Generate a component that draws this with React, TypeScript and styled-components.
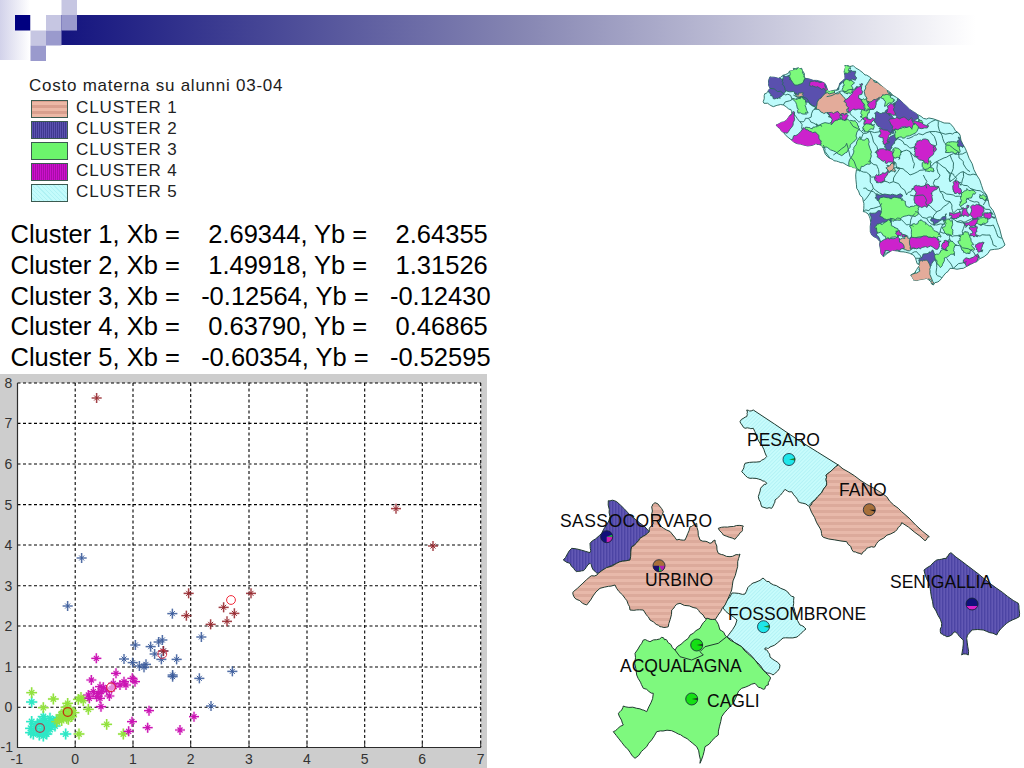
import React from "react";
import styled, { createGlobalStyle } from "styled-components";

type Pt = [number, number];

const GlobalStyle = createGlobalStyle`
  html, body {
    margin: 0;
    padding: 0;
    background: #fff;
    overflow: hidden;
  }
`;

// coordinates below were read from 3x crops, this maps them back to the page
const toPoints = (ox: number, oy: number, list: Pt[], scale = 3) =>
  list.map(([x, y]) => `${(ox + x / scale).toFixed(1)},${(oy + y / scale).toFixed(1)}`).join(" ");

const noise = (a: number, b: number) => {
  const s = Math.sin(a * 12.9898 + b * 78.233) * 43758.5453;
  return s - Math.floor(s) - 0.5;
};

// borders on the maps are wiggly, split each edge and push the midpoint around.
// the push only depends on the midpoint so neighbours keep a shared border
const roughen = (list: Pt[], amp: number, depth = 2, closed = true): Pt[] => {
  let out = list;
  let a = amp;
  for (let d = 0; d < depth; d++) {
    const next: Pt[] = [];
    out.forEach((p, i) => {
      next.push(p);
      const q = out[i + 1] ?? (closed ? out[0] : null);
      if (!q) return;
      const mx = (p[0] + q[0]) / 2;
      const my = (p[1] + q[1]) / 2;
      const key = Math.round(mx * 2);
      const key2 = Math.round(my * 2);
      next.push([mx + noise(key, key2) * a, my + noise(key2, key) * a]);
    });
    out = next;
    a *= 0.65;
  }
  return out;
};

// the patches on the small map were traced a bit too tight
const grow = (list: Pt[], k: number): Pt[] => {
  const cx = list.reduce((acc, p) => acc + p[0], 0) / list.length;
  const cy = list.reduce((acc, p) => acc + p[1], 0) / list.length;
  return list.map(([x, y]) => [cx + (x - cx) * k, cy + (y - cy) * k]);
};

const parseLine = (s: string): Pt[] => s.split(" ").map((p) => p.split(",").map(Number) as Pt);
const joinPts = (list: Pt[]) => list.map(([x, y]) => `${x.toFixed(1)},${y.toFixed(1)}`).join(" ");

const CLUSTERS = [
  { label: "CLUSTER 1", kind: "salmon" },
  { label: "CLUSTER 2", kind: "blue" },
  { label: "CLUSTER 3", kind: "green" },
  { label: "CLUSTER 4", kind: "magenta" },
  { label: "CLUSTER 5", kind: "cyan" },
];

const CENTROIDS = [
  "Cluster 1, Xb =    2.69344, Yb =    2.64355",
  "Cluster 2, Xb =    1.49918, Yb =    1.31526",
  "Cluster 3, Xb =   -0.12564, Yb =   -0.12430",
  "Cluster 4, Xb =    0.63790, Yb =    0.46865",
  "Cluster 5, Xb =   -0.60354, Yb =   -0.52595",
];

/* ---------- scatter data ---------- */
const BLUE_STARS: Pt[] = [[245, -36], [203, 108], [517, 131], [604, 201], [487, 210], [476, 216], [406, 225], [452, 230], [464, 252], [490, 243], [372, 267], [398, 278], [418, 288], [438, 283], [432, 292], [484, 268], [530, 268], [518, 315], [518, 320], [598, 325], [697, 304], [633, 408]];
const RED_STARS: Pt[] = [[290, -516], [1188, -184], [1299, -72], [753, 70], [566, 70], [559, 137], [632, 163], [671, 112], [681, 154], [703, 130], [490, 243]];
const CYAN_STARS: Pt[] = [[95, 396], [197, 492], [95, 455], [92, 475], [100, 492], [112, 462], [118, 495], [128, 470], [135, 452], [140, 462], [150, 445], [160, 455], [170, 450], [130, 440], [140, 492], [150, 478], [105, 470], [165, 468], [130, 498], [110, 482], [125, 482], [145, 470], [155, 462], [135, 480], [120, 455], [180, 442], [92, 488]];
const GREEN_STARS: Pt[] = [[95, 368], [160, 387], [203, 400], [235, 388], [250, 392], [243, 382], [265, 418], [130, 413], [320, 463], [237, 492], [370, 492], [205, 432], [190, 440], [178, 448], [215, 440], [212, 420], [192, 425], [185, 452], [200, 445], [170, 455], [222, 428], [205, 448], [198, 412], [183, 435]];
const MAGENTA_STARS: Pt[] = [[289, 265], [274, 330], [348, 310], [397, 325], [405, 335], [378, 345], [372, 335], [340, 340], [335, 355], [300, 350], [310, 352], [265, 375], [280, 365], [295, 370], [300, 385], [320, 360], [328, 378], [303, 410], [447, 422], [396, 455], [443, 473], [386, 484], [540, 480], [582, 440], [360, 345], [268, 385], [290, 380], [305, 365], [342, 350]];

const Star = ({ x, y, color, r = 5, w = 1 }: { x: number; y: number; color: string; r?: number; w?: number }) => {
  const px = x / 3;
  const py = 570 + y / 3;
  const d = r * 0.5;
  const plus = `M${px - r} ${py}H${px + r}M${px} ${py - r}V${py + r}`;
  const cross = `M${px - d} ${py - d}L${px + d} ${py + d}M${px - d} ${py + d}L${px + d} ${py - d}`;
  return (
    <>
      <path d={plus} stroke={color} strokeWidth={w + 1.2} strokeOpacity={0.28} fill="none" />
      <path d={plus + cross} stroke={color} strokeWidth={w} fill="none" />
    </>
  );
};

const XS = [17.5, 75.2, 133, 190.7, 249, 307, 364.7, 422.3, 480.7];
const YS = [383, 423.4, 464, 504.6, 545, 585.7, 626, 667, 707.3, 747.3];

/* ---------- small map ---------- */
const MAP_OUTLINE: Pt[] = [[285, 30], [310, 32], [345, 60], [370, 75], [410, 105], [450, 135], [490, 170], [520, 190], [560, 195], [600, 205], [630, 240], [650, 290], [680, 360], [710, 420], [735, 480], [765, 570], [720, 585], [680, 620], [640, 640], [600, 640], [575, 670], [550, 690], [530, 670], [490, 675], [482, 660], [510, 630], [490, 600], [450, 590], [420, 590], [400, 605], [390, 560], [365, 540], [360, 490], [340, 470], [340, 440], [320, 400], [320, 340], [300, 335], [265, 320], [240, 310], [220, 280], [200, 265], [160, 270], [130, 260], [100, 232], [78, 210], [110, 195], [125, 170], [100, 150], [70, 155], [42, 145], [45, 115], [60, 100], [60, 65], [85, 70], [115, 55], [130, 40], [155, 40], [165, 70], [215, 80], [235, 110], [260, 105], [285, 70]];

const MAP_PATCHES: { fill: string; list: Pt[][] }[] = [
  {
    fill: "#5a50ae",
    list: [
      [[60, 62], [80, 68], [105, 90], [95, 115], [75, 125], [58, 105]],
      [[110, 70], [130, 75], [150, 85], [185, 65], [225, 95], [215, 125], [190, 145], [165, 130], [140, 115], [115, 100]],
      [[280, 65], [300, 50], [315, 70], [285, 80], [265, 100]],
      [[385, 175], [415, 170], [430, 200], [425, 230], [395, 225], [380, 200]],
      [[435, 150], [455, 135], [490, 170], [500, 190], [465, 195], [445, 190], [430, 165]],
      [[405, 260], [440, 245], [425, 275], [405, 285]],
      [[620, 265], [628, 250], [638, 272]],
      [[385, 420], [445, 418], [450, 432], [390, 435]],
      [[365, 482], [395, 478], [425, 490], [415, 505], [385, 515], [385, 540], [395, 570], [375, 565], [362, 530]],
      [[550, 490], [585, 480], [580, 495], [555, 508]],
      [[515, 610], [545, 590], [555, 615], [535, 635], [515, 625]],
    ],
  },
  {
    fill: "#7cf97c",
    list: [
      [[125, 45], [150, 40], [160, 70], [140, 85], [125, 70]],
      [[230, 105], [255, 103], [258, 120], [235, 125]],
      [[130, 135], [155, 130], [170, 170], [145, 170]],
      [[215, 215], [270, 200], [300, 205], [315, 225], [290, 265], [270, 290], [225, 270], [200, 245], [178, 225], [205, 220]],
      [[330, 255], [350, 260], [355, 320], [330, 340], [300, 340], [315, 290]],
      [[285, 35], [300, 35], [300, 50], [280, 50]],
      [[285, 80], [310, 85], [305, 110], [285, 110]],
      [[325, 130], [350, 130], [370, 155], [345, 155]],
      [[340, 165], [355, 165], [350, 190], [335, 185]],
      [[345, 210], [370, 210], [355, 228], [340, 225]],
      [[390, 125], [420, 115], [430, 135], [405, 150]],
      [[440, 225], [470, 220], [500, 200], [510, 215], [470, 240], [445, 250]],
      [[430, 285], [450, 290], [445, 310], [425, 300]],
      [[520, 325], [540, 320], [548, 340], [530, 345]],
      [[590, 270], [620, 265], [625, 290], [590, 290]],
      [[635, 425], [650, 405], [672, 415], [650, 430], [635, 450]],
      [[700, 420], [710, 425], [712, 435], [695, 430]],
      [[400, 435], [445, 435], [465, 455], [495, 450], [495, 475], [460, 480], [430, 490], [400, 480]],
      [[385, 515], [415, 500], [430, 520], [435, 545], [410, 550], [385, 525]],
      [[490, 515], [515, 500], [540, 515], [565, 540], [560, 550], [495, 545]],
      [[585, 505], [605, 500], [605, 530], [585, 530]],
      [[630, 545], [655, 540], [665, 565], [670, 580], [650, 590], [630, 565]],
      [[560, 600], [590, 585], [600, 565], [615, 575], [610, 600], [590, 605], [575, 630]],
      [[680, 490], [705, 485], [710, 500], [682, 505]],
    ],
  },
  {
    fill: "#e3ab9a",
    list: [
      [[365, 75], [410, 105], [420, 120], [390, 125], [370, 155], [350, 110]],
      [[205, 160], [235, 120], [265, 120], [290, 150], [285, 170], [240, 180], [225, 170]],
      [[140, 115], [158, 115], [150, 130]],
      [[452, 555], [470, 545], [490, 555], [490, 578], [465, 580]],
      [[510, 630], [530, 625], [545, 680], [530, 670], [490, 675], [482, 660], [510, 650]],
      [[415, 335], [430, 325], [435, 345], [420, 350]],
    ],
  },
  {
    fill: "#cc22cc",
    list: [
      [[78, 208], [105, 195], [128, 178], [110, 230], [90, 232]],
      [[130, 255], [160, 225], [190, 235], [205, 265], [165, 275], [145, 268]],
      [[235, 175], [262, 172], [270, 190], [245, 205]],
      [[275, 178], [290, 180], [285, 195]],
      [[290, 135], [320, 100], [335, 95], [325, 130], [340, 160], [300, 165]],
      [[345, 190], [365, 190], [365, 208], [345, 208]],
      [[355, 140], [385, 130], [375, 155], [360, 155]],
      [[185, 85], [220, 80], [230, 100], [205, 95]],
      [[415, 155], [435, 150], [435, 175], [420, 178]],
      [[425, 195], [460, 190], [480, 195], [480, 220], [450, 218], [430, 225]],
      [[390, 225], [420, 235], [415, 260], [400, 262], [390, 245]],
      [[495, 200], [530, 210], [510, 218]],
      [[505, 262], [525, 258], [552, 285], [530, 320], [505, 305], [498, 285]],
      [[385, 290], [425, 295], [428, 325], [405, 320], [385, 305]],
      [[382, 360], [410, 350], [395, 380], [382, 380]],
      [[492, 405], [530, 392], [560, 400], [540, 415], [530, 450], [500, 440]],
      [[612, 385], [630, 385], [632, 410], [615, 412]],
      [[635, 460], [655, 455], [655, 480], [635, 482]],
      [[665, 458], [690, 455], [695, 480], [670, 490]],
      [[705, 475], [725, 475], [730, 485], [708, 488]],
      [[645, 505], [680, 495], [675, 515], [650, 515]],
      [[660, 520], [680, 520], [680, 540], [662, 540]],
      [[680, 570], [700, 565], [695, 585], [685, 585]],
      [[648, 612], [680, 600], [675, 620], [650, 628]],
      [[600, 475], [625, 470], [620, 485], [603, 488]],
      [[580, 565], [595, 560], [590, 585], [580, 580]],
      [[395, 565], [420, 555], [440, 548], [455, 580], [425, 590], [405, 590], [400, 605]],
      [[490, 550], [540, 550], [565, 560], [555, 580], [520, 575], [490, 580]],
      [[445, 530], [465, 540], [460, 545], [445, 545]],
    ],
  },
];

const MAP_LINES = [
  "450,340 480,360 520,345 560,320 600,300 650,290",
  "470,250 500,240 540,230 600,235 630,240",
  "540,230 560,270 550,290",
  "560,320 570,360 550,385 570,410 600,440",
  "600,300 610,340 600,380 640,350 680,360",
  "640,350 630,390 660,400 710,420",
  "450,340 430,380 470,420 490,400",
  "340,400 370,410 385,420",
  "320,340 360,360 380,370",
  "360,360 370,400 340,440",
  "340,470 370,460 395,445",
  "530,450 560,470 600,440",
  "495,470 530,490 550,490",
  "420,490 450,490 470,510 490,515",
  "580,495 590,505",
  "605,490 640,500 640,540",
  "570,530 600,540 630,545",
  "690,510 730,510 755,550",
  "680,540 720,540 740,575",
  "650,430 680,440 700,455 730,480",
  "710,420 700,450",
  "600,540 590,560",
  "460,590 480,620 510,610",
  "590,610 610,640 650,620",
  "615,570 670,590",
  "130,120 170,130 200,160 175,190 150,200 130,175",
  "175,190 200,210 215,215",
  "150,200 160,225",
  "60,100 100,115 125,130 100,150",
  "230,125 290,110 320,100",
  "300,170 325,200 340,190",
  "300,200 340,235 390,230",
  "340,235 330,255",
  "360,230 385,290",
  "355,320 380,330 385,360",
  "440,250 470,270 500,280",
  "450,290 480,290 505,305",
  "430,320 450,340",
  "480,290 490,340",
  "530,210 560,195",
  "560,195 570,230",
  "520,360 530,400",
  "590,345 620,370 620,385",
  "400,600 420,590",
  "480,600 500,590 515,610",
  "555,615 560,660 575,670",
  "570,230 590,270 625,290 640,320",
  "600,380 590,345 560,320",
  "640,320 660,350",
  "570,410 610,420 635,425",
  "600,440 610,475 640,460",
  "560,470 550,490",
  "480,420 520,420 530,450",
  "370,400 400,420",
  "450,340 420,350",
  "395,380 430,380",
  "495,475 480,510",
  "565,540 580,505",
  "620,500 680,490",
  "530,490 560,510 585,505",
  "670,590 690,610",
  "250,300 290,265 320,340",
  "220,270 240,310",
];

/* ---------- big map ---------- */
const PESARO: Pt[] = [[80, 30], [100, 30], [355, 195], [318, 225], [320, 255], [285, 300], [265, 318], [235, 305], [215, 275], [195, 268], [165, 300], [155, 325], [125, 320], [115, 290], [125, 260], [140, 250], [125, 240], [90, 235], [65, 215], [75, 190], [120, 185], [140, 170], [120, 130], [100, 85], [75, 85], [60, 65], [80, 50]];
const FANO: Pt[] = [[355, 195], [420, 240], [500, 290], [545, 335], [628, 410], [615, 422], [545, 368], [525, 395], [480, 420], [465, 440], [440, 445], [425, 463], [400, 455], [380, 425], [310, 412], [300, 385], [268, 320], [285, 300], [320, 255], [318, 225]];
const SENIGALLIA: Pt[] = [[693, 458], [760, 510], [830, 565], [895, 610], [898, 650], [860, 670], [830, 705], [790, 690], [755, 690], [740, 715], [745, 765], [725, 765], [730, 720], [705, 695], [680, 710], [662, 700], [665, 670], [640, 620], [630, 560], [612, 510], [650, 480], [680, 475]];
const FOSSOMBRONE: Pt[] = [[723, 608], [732, 593], [745, 594], [753, 583], [763, 578], [770, 583], [785, 590], [794, 597], [794, 608], [800, 625], [806, 629], [797, 637], [783, 638], [770, 647], [765, 648], [767, 650], [770, 657], [780, 665], [773, 675], [767, 673], [755, 660], [742, 647], [727, 637], [737, 620]];
const URBINO: Pt[] = [[315, 308], [340, 335], [325, 370], [350, 390], [380, 420], [405, 420], [420, 380], [440, 370], [450, 420], [480, 430], [495, 420], [505, 460], [540, 470], [570, 462], [560, 510], [545, 570], [525, 615], [495, 660], [465, 655], [440, 625], [390, 610], [365, 630], [355, 680], [330, 680], [300, 660], [280, 630], [240, 630], [225, 595], [195, 555], [150, 565], [110, 615], [75, 595], [70, 575], [120, 530], [145, 520], [200, 490], [240, 480], [245, 440], [270, 415], [298, 395], [310, 370], [305, 320]];
const URBINO_ISLAND: Pt[] = [[505, 385], [540, 380], [580, 378], [575, 395], [555, 418], [520, 405]];
const SASSOCORVARO: Pt[] = [[175, 302], [200, 305], [240, 345], [298, 395], [270, 415], [245, 440], [240, 480], [200, 490], [145, 520], [130, 510], [120, 490], [100, 512], [80, 515], [60, 490], [40, 480], [65, 445], [120, 458], [120, 430], [155, 400], [180, 350]];
const GREEN_REGION: Pt[] = [[320, 55], [345, 58], [360, 90], [380, 110], [425, 140], [465, 180], [510, 230], [505, 255], [490, 268], [465, 250], [425, 265], [400, 310], [365, 350], [355, 405], [315, 440], [300, 490], [290, 440], [250, 410], [215, 392], [170, 395], [140, 440], [105, 475], [75, 440], [40, 395], [70, 375], [55, 340], [70, 318], [110, 325], [140, 335], [160, 280], [130, 265], [110, 225], [105, 160], [130, 120], [150, 125], [185, 112], [200, 120], [225, 150], [265, 115], [300, 85]];
const GREEN_BORDER: Pt[] = [[225, 150], [240, 170], [275, 180], [310, 165], [300, 155], [315, 140], [355, 130], [380, 110]];

const PIES = [
  { x: 789, y: 459.5, base: "#1fe6ea", slices: [{ d: "M0 0L6 -1.6A6 6 0 0 1 6 1Z", fill: "#1b8a2a" }] },
  { x: 869.3, y: 509.7, base: "#a8703a", slices: [{ d: "M0 0L6 0A6 6 0 0 1 5.6 2Z", fill: "#111" }] },
  { x: 972, y: 604, base: "#10107a", slices: [{ d: "M-5.6 2A6 6 0 0 0 5.6 2Z", fill: "#d820c8" }] },
  { x: 763.5, y: 626.7, base: "#1fe6ea", slices: [{ d: "M0 0L6 -1.6A6 6 0 0 1 6 1Z", fill: "#1b8a2a" }] },
  { x: 659, y: 565.7, base: "#a8703a", slices: [{ d: "M-6 0A6 6 0 0 0 0 6L0 0Z", fill: "#1a1070" }, { d: "M0 0L0 6A6 6 0 0 0 3 5.2Z", fill: "#20c040" }, { d: "M0 0L3 5.2A6 6 0 0 0 6 0Z", fill: "#b020b0" }] },
  { x: 606.7, y: 536.7, base: "#10107a", slices: [{ d: "M0 0L6 0A6 6 0 0 1 0 6Z", fill: "#c820b0" }, { d: "M0 0L6 0L5.6 -2Z", fill: "#20c040" }] },
  { x: 696.7, y: 645, base: "#14e014", slices: [{ d: "M0 0L6 -1A6 6 0 0 1 6 1Z", fill: "#222" }] },
  { x: 691.7, y: 699, base: "#14e014", slices: [{ d: "M0 0L6 -1A6 6 0 0 1 6 1Z", fill: "#222" }] },
];

const LABELS = [
  { text: "PESARO", x: 747, y: 446 },
  { text: "FANO", x: 839, y: 496 },
  { text: "SASSOCORVARO", x: 560, y: 526.5, width: 152 },
  { text: "URBINO", x: 645, y: 585.5 },
  { text: "SENIGALLIA", x: 890, y: 587.5 },
  { text: "FOSSOMBRONE", x: 728, y: 620 },
  { text: "ACQUALAGNA", x: 620, y: 671.5 },
  { text: "CAGLI", x: 707, y: 706.5 },
];

const App = () => {
  return (
    <>
      <GlobalStyle />
      <Page>
        <Banner viewBox="0 0 1024 61">
          <defs>
            <linearGradient id="barFade" x1="0" x2="1" y1="0" y2="0">
              <stop offset="0" stopColor="#14147f" />
              <stop offset="0.5" stopColor="#8585b2" />
              <stop offset="1" stopColor="#ffffff" />
            </linearGradient>
            <linearGradient id="sideFade" x1="0" x2="1" y1="0" y2="0">
              <stop offset="0" stopColor="#d2d2ea" />
              <stop offset="1" stopColor="#ffffff" />
            </linearGradient>
          </defs>
          <rect x="0" y="0" width="30" height="60" fill="url(#sideFade)" />
          <rect x="61" y="15" width="915" height="30" fill="url(#barFade)" />
          <rect x="15" y="15" width="15.5" height="15.5" fill="#000080" />
          <rect x="30.5" y="15" width="15.5" height="15.5" fill="#fff" />
          <rect x="46" y="15" width="15.5" height="15.5" fill="#c6c6e2" />
          <rect x="61.5" y="15" width="15.5" height="15.5" fill="#9a9acd" />
          <rect x="61.5" y="0" width="15.5" height="15" fill="#c6c6e2" />
          <rect x="30.5" y="30.5" width="15.5" height="15" fill="#c6c6e2" />
          <rect x="46" y="30.5" width="15.5" height="15" fill="#9a9acd" />
          <rect x="30.5" y="45.5" width="15.5" height="15.5" fill="#9a9acd" />
        </Banner>
        <Columns>
          <LeftColumn>
            <Legend>
              <LegendTitle>Costo materna su alunni 03-04</LegendTitle>
              {CLUSTERS.map((c) => (
                <LegendRow key={c.label}>
                  <Swatch $kind={c.kind} />
                  <LegendLabel>{c.label}</LegendLabel>
                </LegendRow>
              ))}
            </Legend>
            <Centroids>
              {CENTROIDS.map((line) => (
                <CentroidLine key={line}>{line}</CentroidLine>
              ))}
            </Centroids>
            <Plot viewBox="0 374 487 394">
              <rect x="17.5" y="383" width="463.2" height="364.3" fill="#fff" />
              <GridLines>
                {XS.slice(1).map((x) => (
                  <line key={x} x1={x} x2={x} y1={383} y2={747} />
                ))}
                {YS.slice(0, -1).map((y) => (
                  <line key={y} x1={17.5} x2={481} y1={y} y2={y} />
                ))}
              </GridLines>
              <path d="M17.5 383V747.5H481" fill="none" stroke="#2c2c2c" strokeWidth="1.2" />
              {XS.map((x) => (
                <line key={x} x1={x} x2={x} y1={747.5} y2={743} stroke="#2c2c2c" />
              ))}
              <Marks>
                {BLUE_STARS.map(([x, y], i) => (
                  <Star key={`b${i}`} x={x} y={y} color="#3c5c9c" />
                ))}
                {RED_STARS.map(([x, y], i) => (
                  <Star key={`r${i}`} x={x} y={y} color="#96282e" />
                ))}
                {CYAN_STARS.map(([x, y], i) => (
                  <Star key={`c${i}`} x={x} y={y} color="#2ee8c6" r={5.6} w={1.4} />
                ))}
                {GREEN_STARS.map(([x, y], i) => (
                  <Star key={`g${i}`} x={x} y={y} color="#92e23e" r={5.4} w={1.3} />
                ))}
                {MAGENTA_STARS.map(([x, y], i) => (
                  <Star key={`m${i}`} x={x} y={y} color="#cc14b4" r={5} w={1.2} />
                ))}
                <circle cx="231" cy="600" r="4.4" fill="none" stroke="#f02838" />
                <circle cx="162.3" cy="654" r="4.4" fill="none" stroke="#d83048" />
                <circle cx="111" cy="687.3" r="4.4" fill="#fff" fillOpacity="0.5" stroke="#e01830" />
                <circle cx="67.7" cy="712" r="4.4" fill="none" stroke="#c03010" strokeWidth="1.3" />
                <circle cx="40" cy="728" r="4.4" fill="none" stroke="#a04850" strokeWidth="1.3" />
              </Marks>
              {YS.map((y, i) => (
                <AxisText key={y} x={i === 9 ? 0.5 : 4.5} y={y + 5}>
                  {8 - i}
                </AxisText>
              ))}
              {XS.map((x, i) => (
                <AxisText key={x} x={i === 0 ? x - 7 : x - 4} y={764}>
                  {i - 1}
                </AxisText>
              ))}
            </Plot>
          </LeftColumn>
          <RightColumn>
            <SmallMap viewBox="0 18 780 687">
              <defs>
                <clipPath id="marche">
                  <polygon points={joinPts(roughen(MAP_OUTLINE, 9, 2))} />
                </clipPath>
              </defs>
              <MapBase points={joinPts(roughen(MAP_OUTLINE, 9, 2))} fill="#bdfbfb" />
              <g clipPath="url(#marche)">
                {MAP_PATCHES.map((group) =>
                  group.list.map((list, i) => (
                    <MapBase key={`${group.fill}${i}`} points={joinPts(roughen(grow(list, 1.22), 15, 3))} fill={group.fill} />
                  ))
                )}
                {MAP_LINES.map((pts) => (
                  <MapBase as="polyline" key={pts} points={joinPts(roughen(parseLine(pts), 12, 2, false))} fill="none" />
                ))}
              </g>
            </SmallMap>
            <RegionMap viewBox="550 400 474 368">
              <defs>
                <pattern id="hatchSalmon" width="6" height="6" patternUnits="userSpaceOnUse">
                  <rect width="6" height="6" fill="#e8b9aa" />
                  <rect width="6" height="3" fill="#dcaa9b" />
                </pattern>
                <pattern id="hatchBlue" width="3" height="3" patternUnits="userSpaceOnUse">
                  <rect width="3" height="3" fill="#6258b4" />
                  <rect width="1.4" height="3" fill="#4c44a4" />
                </pattern>
                <pattern id="hatchCyan" width="2.6" height="2.6" patternUnits="userSpaceOnUse" patternTransform="rotate(45)">
                  <rect width="2.6" height="2.6" fill="#c8fcfc" />
                  <rect width="0.9" height="2.6" fill="#b2f2f5" />
                </pattern>
              </defs>
              <Region points={toPoints(720, 400, roughen(PESARO, 6))} fill="url(#hatchCyan)" />
              <Region points={toPoints(0, 0, roughen(FOSSOMBRONE, 2.4), 1)} fill="url(#hatchCyan)" />
              <Region points={toPoints(720, 400, roughen(FANO, 6))} fill="url(#hatchSalmon)" />
              <Region points={toPoints(720, 400, roughen(SENIGALLIA, 6))} fill="url(#hatchBlue)" />
              <Region points={toPoints(550, 400, roughen(SASSOCORVARO, 6))} fill="url(#hatchBlue)" />
              <Region points={toPoints(550, 400, roughen(URBINO, 7))} fill="url(#hatchSalmon)" />
              <Region points={toPoints(550, 400, roughen(URBINO_ISLAND, 5))} fill="url(#hatchSalmon)" />
              <Region points={toPoints(600, 600, roughen(GREEN_REGION, 7))} fill="#7ef97e" />
              <Region as="polyline" points={toPoints(600, 600, GREEN_BORDER)} fill="none" />
              {PIES.map((pie) => (
                <g key={pie.x} transform={`translate(${pie.x} ${pie.y})`}>
                  <circle r="6" fill={pie.base} />
                  {pie.slices.map((s) => (
                    <path key={s.d} d={s.d} fill={s.fill} />
                  ))}
                  <circle r="6" fill="none" stroke="#123" strokeWidth="0.8" />
                </g>
              ))}
              {LABELS.map((l) => (
                <PlaceName key={l.text} x={l.x} y={l.y} textLength={l.width}>
                  {l.text}
                </PlaceName>
              ))}
            </RegionMap>
          </RightColumn>
        </Columns>
      </Page>
    </>
  );
};

export default App;

const Page = styled.div`
  width: 1024px;
  height: 768px;
  display: flex;
  flex-direction: column;
  background: #fff;
  overflow: hidden;
  font-family: "Liberation Sans", Arial, sans-serif;
`;

const Banner = styled.svg`
  display: block;
  flex: none;
  width: 1024px;
  height: 61px;
`;

const Columns = styled.div`
  flex: 1;
  display: grid;
  grid-template-columns: 490px 534px;
  min-height: 0;
`;

const LeftColumn = styled.div`
  display: flex;
  flex-direction: column;
  min-height: 0;
`;

const RightColumn = styled.div`
  display: flex;
  flex-direction: column;
  justify-content: space-between;
  min-height: 0;
`;

const Legend = styled.div`
  padding: 15px 0 0 29px;
`;

const LegendTitle = styled.div`
  font-size: 17px;
  line-height: 20px;
  letter-spacing: 0.75px;
  color: #1c1c1c;
  margin-bottom: 4px;
`;

const LegendRow = styled.div`
  display: flex;
  align-items: center;
  gap: 8px;
  height: 18px;
  margin: 0 0 3px 2px;
`;

const swatchFill: Record<string, string> = {
  salmon: "repeating-linear-gradient(0deg, #ecb8a6 0 3px, #d99f8e 3px 6px)",
  blue: "repeating-linear-gradient(90deg, #5a52b0 0 1px, #3e388e 1px 2px)",
  green: "#6cf56c",
  magenta: "repeating-linear-gradient(90deg, #cc10cc 0 1px, #a80ca8 1px 2px)",
  cyan: "repeating-linear-gradient(45deg, #c4fbfb 0 2px, #aff2f4 2px 3px)",
};

const Swatch = styled.div<{ $kind: string }>`
  box-sizing: border-box;
  width: 37px;
  height: 18px;
  border: 1px solid #3b5a50;
  background: ${(p) => swatchFill[p.$kind]};
`;

const LegendLabel = styled.span`
  font-size: 17px;
  line-height: 14px;
  letter-spacing: 0.9px;
  color: #222;
  margin-top: -3px;
`;

const Centroids = styled.div`
  margin: 14px 0 0 10.5px;
`;

const CentroidLine = styled.div`
  font-size: 25.5px;
  line-height: 30.8px;
  color: #000;
  white-space: pre;
`;

const Plot = styled.svg`
  display: block;
  flex: none;
  margin-top: auto;
  width: 487px;
  height: 394px;
  background: #cdcdcd;
`;

const GridLines = styled.g`
  stroke: #000;
  stroke-width: 1.1;
  stroke-dasharray: 3 2.5;
`;

const Marks = styled.g`
  filter: blur(0.3px);
`;

const AxisText = styled.text`
  font-family: "Liberation Sans", Arial, sans-serif;
  font-size: 14px;
  fill: #333;
`;

const SmallMap = styled.svg`
  display: block;
  flex: none;
  width: 260px;
  height: 229px;
  margin-left: 260px;
  filter: blur(0.3px);
`;

const MapBase = styled.polygon`
  stroke: #2a6a62;
  stroke-width: 2.8;
  stroke-linejoin: round;
`;

const RegionMap = styled.svg`
  display: block;
  flex: none;
  width: 474px;
  height: 368px;
  margin-left: 60px;
`;

const Region = styled.polygon`
  stroke: #1f3a30;
  stroke-width: 1;
  stroke-linejoin: round;
`;

const PlaceName = styled.text`
  font-family: "Liberation Sans", Arial, sans-serif;
  font-size: 17.5px;
  fill: #0a0a0a;
`;
